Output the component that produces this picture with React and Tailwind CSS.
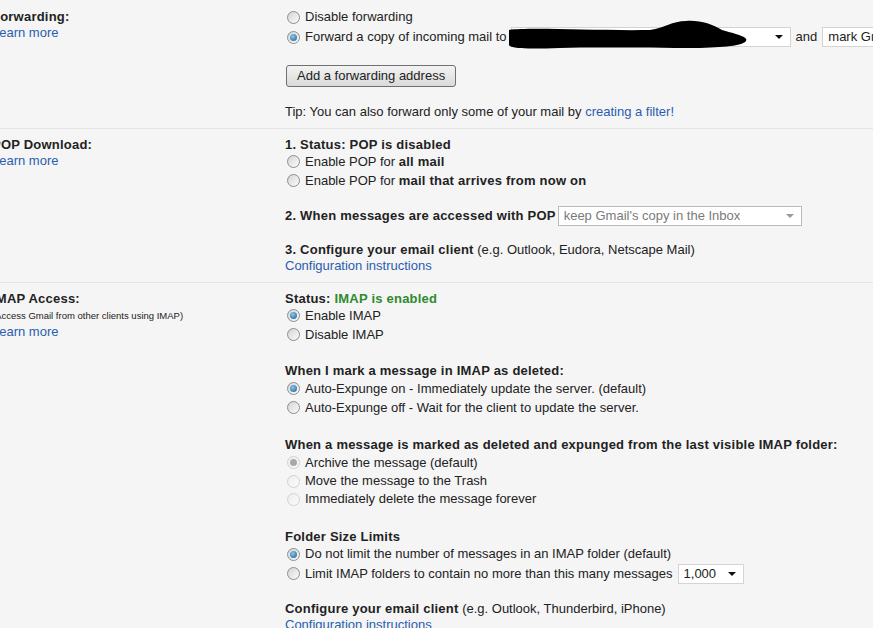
import clsx from "clsx";

const bold = "font-bold tracking-[0.22px]";

const Radio = ({ checked, disabled }) => (
  <span
    className={clsx(
      "ml-[2px] mr-[5px] flex h-[13px] w-[13px] shrink-0 items-center justify-center rounded-full border bg-gradient-to-br",
      disabled ? "border-[#d2d2d2] from-[#ededed] to-[#fbfbfb]" : "border-[#8e8e8e] from-[#d4d4d4] to-[#fcfcfc]"
    )}
  >
    {checked && (
      <span
        className={clsx(
          "h-[7px] w-[7px] rounded-full",
          disabled ? "bg-[#a9a9a9]" : "bg-[radial-gradient(circle_at_40%_35%,#86c8ee,#1c5d8a)]"
        )}
      />
    )}
  </span>
);

const Option = ({ checked, disabled, className = "h-[19px]", children }) => (
  <div className={clsx("flex items-center whitespace-nowrap", className)}>
    <Radio checked={checked} disabled={disabled} />
    <span>{children}</span>
  </div>
);

const Arrow = ({ muted }) => (
  <span
    className={clsx(
      "h-0 w-0 border-x-[4px] border-t-[4px] border-x-transparent",
      muted ? "border-t-[#9a9a9a]" : "border-t-[#111]"
    )}
  />
);

const Select = ({ className, muted, children }) => (
  <span
    className={clsx(
      "flex h-[20px] shrink-0 items-center justify-between border bg-white pl-[5px] pr-[7px]",
      muted ? "border-[#b9b9b9] text-[#7a7a7a]" : "border-[#d4d4d4]",
      className
    )}
  >
    <span className="truncate">{children}</span>
    <Arrow muted={muted} />
  </span>
);

const Link = ({ children }) => <a className="text-[#2a5db0]">{children}</a>;

const Section = ({ left, children, rightClass }) => (
  <section className="flex border-b border-[#e4e4e4]">
    <div className="-ml-2 w-[293px] shrink-0">{left}</div>
    <div className={clsx("min-w-0 flex-1", rightClass)}>{children}</div>
  </section>
);

export default function App() {
  return (
    <div className="h-[628px] w-[873px] overflow-hidden bg-[#f5f5f5] font-['Liberation_Sans',Arial,sans-serif] text-[13px] text-[#222]">
      {/* Forwarding */}
      <Section
        rightClass="pt-[7px] pb-[8px]"
        left={
          <div className="pt-[9px]">
            <div className={clsx(bold, "leading-[16px]")}>Forwarding:</div>
            <div className="leading-[15px]">
              <Link>Learn more</Link>
            </div>
          </div>
        }
      >
        <Option className="h-[20px]">Disable forwarding</Option>
        <Option checked className="h-[20px]">
          <span className="flex items-center">
            Forward a copy of incoming mail to
            <span className="relative ml-[4px]">
              <Select className="w-[280px]"> </Select>
              <svg className="absolute left-[-6px] top-[-9px]" width="245" height="33" viewBox="505 18 245 33">
                <path
                  d="M509,30 C530,27 600,31 650,30 C665,28 672,21 686,21 C700,20 712,24 722,30 C736,34 749,37 746,41 C743,45 730,47 700,48 C650,48 600,47 560,48 C530,49 511,49 509,45 Z"
                  fill="#000"
                />
              </svg>
            </span>
            <span className="mx-[5px]">and</span>
            <Select className="w-[220px]">mark Gmail's copy as read</Select>
          </span>
        </Option>
        <button className="ml-px mt-[18px] h-[22px] rounded-[3px] border border-[#707070] bg-gradient-to-b from-[#f3f3f3] to-[#dadada] px-[10px] leading-[20px]">
          Add a forwarding address
        </button>
        <div className="mt-[16px] h-[17px] leading-[17px]">
          Tip: You can also forward only some of your mail by <Link>creating a filter!</Link>
        </div>
      </Section>

      {/* POP */}
      <Section
        rightClass="pt-[7px] pb-[8px]"
        left={
          <div className="pt-[8px] leading-[16px]">
            <div className={bold}>POP Download:</div>
            <Link>Learn more</Link>
          </div>
        }
      >
        <div className={clsx(bold, "h-[16px] leading-[17px]")}>1. Status: POP is disabled</div>
        <Option>
          Enable POP for <b className={bold}>all mail</b>
        </Option>
        <Option>
          Enable POP for <b className={bold}>mail that arrives from now on</b>
        </Option>
        <div className="mt-[16px] flex h-[20px] items-center">
          <b className={bold}>2. When messages are accessed with POP</b>
          <Select muted className="ml-[2px] w-[244px]">
            keep Gmail's copy in the Inbox
          </Select>
        </div>
        <div className="mt-[15px] h-[17px] leading-[17px]">
          <b className={bold}>3. Configure your email client</b> (e.g. Outlook, Eudora, Netscape Mail)
        </div>
        <div className="h-[16px] leading-[16px]">
          <Link>Configuration instructions</Link>
        </div>
      </Section>

      {/* IMAP */}
      <Section
        rightClass="pt-[8px]"
        left={
          <div className="pt-[8px]">
            <div className={clsx(bold, "leading-[16px]")}>IMAP Access:</div>
            <div className="whitespace-nowrap text-[9.5px] leading-[17px]">(Access Gmail from other clients using IMAP)</div>
            <div className="leading-[15px]">
              <Link>Learn more</Link>
            </div>
          </div>
        }
      >
        <div className={clsx(bold, "h-[15px] leading-[16px]")}>
          Status: <span className="text-[#2f8a2f]">IMAP is enabled</span>
        </div>
        <Option checked>Enable IMAP</Option>
        <Option>Disable IMAP</Option>

        <div className={clsx(bold, "mt-[19px] h-[16px] leading-[16px]")}>When I mark a message in IMAP as deleted:</div>
        <Option checked>Auto-Expunge on - Immediately update the server. (default)</Option>
        <Option>Auto-Expunge off - Wait for the client to update the server.</Option>

        <div className={clsx(bold, "mt-[20px] h-[16px] leading-[16px]")}>
          When a message is marked as deleted and expunged from the last visible IMAP folder:
        </div>
        <Option checked disabled>Archive the message (default)</Option>
        <Option disabled className="h-[18px]">Move the message to the Trash</Option>
        <Option disabled className="h-[18px]">Immediately delete the message forever</Option>

        <div className={clsx(bold, "mt-[21px] h-[16px] leading-[16px]")}>Folder Size Limits</div>
        <Option checked className="h-[18px]">Do not limit the number of messages in an IMAP folder (default)</Option>
        <Option className="h-[21px]">
          <span className="flex items-center">
            Limit IMAP folders to contain no more than this many messages
            <Select className="ml-[5px] w-[66px]">1,000</Select>
          </span>
        </Option>

        <div className="mt-[17px] h-[16px] leading-[16px]">
          <b className={bold}>Configure your email client</b> (e.g. Outlook, Thunderbird, iPhone)
        </div>
        <div className="h-[16px] leading-[16px]">
          <Link>Configuration instructions</Link>
        </div>
      </Section>
    </div>
  );
}
